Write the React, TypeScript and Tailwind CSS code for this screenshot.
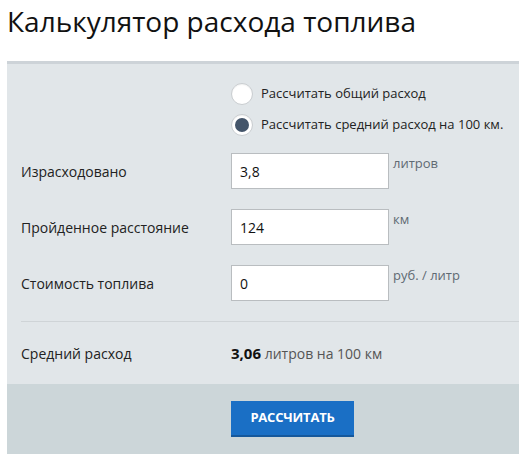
import React from "react";

const font = { fontFamily: '"Open Sans", "Noto Sans", sans-serif' };

function Radio({ checked, label }: { checked?: boolean; label: string }) {
  return (
    <div className="flex items-center h-[31px]">
      <div className="w-[22px] h-[22px] rounded-full bg-white border border-[#c9cdd0] flex items-center justify-center shadow-[inset_0_1px_1px_rgba(0,0,0,0.05)]">
        {checked && <div className="w-[14px] h-[14px] rounded-full bg-[#44556a]" />}
      </div>
      <span className="ml-[8px] text-[13px] text-[#222]">{label}</span>
    </div>
  );
}

function Row({ label, value, unit }: { label: string; value: string; unit: string }) {
  return (
    <div className="flex">
      <div className="w-[210px] flex items-center text-[14px] text-[#222]">{label}</div>
      <input
        readOnly
        value={value}
        className="w-[158px] h-[36px] bg-white border border-[#b9bdc0] px-[8px] text-[14px] text-[#111] outline-none"
        style={font}
      />
      <div className="ml-[4px] pt-[1px] text-[13px] text-[#5f6a73] leading-[18px]">{unit}</div>
    </div>
  );
}

export default function App() {
  return (
    <div className="w-[519px] h-[454px] bg-white overflow-hidden" style={font}>
      <h1 className="pl-[7px] pt-[4px] text-[28px] leading-[35px] text-[#111] font-normal">
        Калькулятор расхода топлива
      </h1>
      <div className="ml-[7px] mt-[22px] border-t-[3px] border-[#cdd3d8] bg-[#e1e6e9]">
        <div className="pl-[14px]">
          <div className="pl-[210px] pt-[14px]">
            <Radio label="Рассчитать общий расход" />
            <Radio checked label="Рассчитать средний расход на 100 км." />
          </div>
          <div className="mt-[13px] flex flex-col gap-[20px]">
            <Row label="Израсходовано" value="3,8" unit="литров" />
            <Row label="Пройденное расстояние" value="124" unit="км" />
            <Row label="Стоимость топлива" value="0" unit="руб. / литр" />
          </div>
          <div className="mt-[20px] border-t border-[#cfd4d7]" />
          <div className="flex items-center h-[62px]">
            <div className="w-[210px] text-[14px] text-[#222]">Средний расход</div>
            <div className="text-[14px] text-[#555]">
              <span className="font-bold text-[#111] text-[15px]">3,06</span> литров на 100 км
            </div>
          </div>
        </div>
        <div className="bg-[#ccd6d9] h-[70px] pl-[224px] pt-[17px]">
          <button className="w-[123px] h-[36px] bg-[#1a6fc5] border-b-2 border-[#15589c] text-white text-[13px] font-bold tracking-[-0.2px]" style={font}>
            РАССЧИТАТЬ
          </button>
        </div>
      </div>
    </div>
  );
}
